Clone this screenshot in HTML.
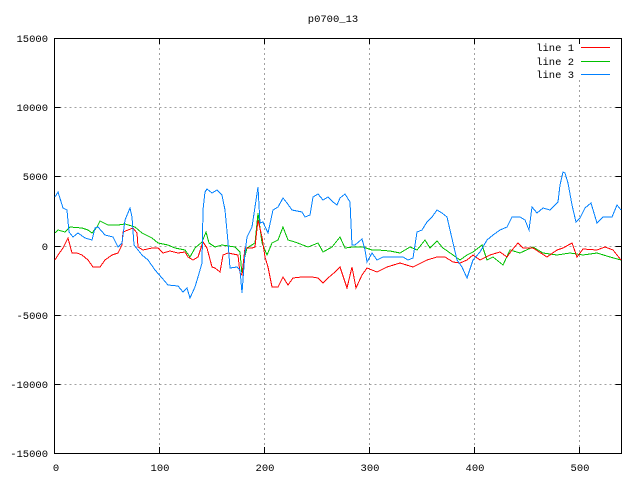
<!DOCTYPE html>
<html><head><style>
html,body{margin:0;padding:0;background:#fff;width:640px;height:480px;overflow:hidden}
svg text{font-family:"Liberation Mono","DejaVu Sans Mono",monospace;font-size:10.5px;fill:#000}
</style></head><body>
<svg width="640" height="480" viewBox="0 0 640 480" xmlns="http://www.w3.org/2000/svg">
<rect width="640" height="480" fill="#fff"/>
<g stroke="#a0a0a0" stroke-width="1" stroke-dasharray="2,3" fill="none">
<path d="M54.5 107.5H621M54.5 176.5H621M54.5 246.5H621M54.5 315.5H621M54.5 384.5H621"/>
<path d="M159.5 38V453M264.5 38V453M369.5 38V453M474.5 38V453M579.5 80V453"/>
</g>
<g stroke="#000" stroke-width="1" fill="none">
<rect x="54.5" y="38.5" width="567" height="415"/>
<path d="M54.5 107.5h6M54.5 176.5h6M54.5 246.5h6M54.5 315.5h6M54.5 384.5h6M621.5 107.5h-6M621.5 176.5h-6M621.5 246.5h-6M621.5 315.5h-6M621.5 384.5h-6"/>
<path d="M159.5 453v-6M264.5 453v-6M369.5 453v-6M474.5 453v-6M579.5 453v-6M159.5 38v6M264.5 38v6M369.5 38v6M474.5 38v6M579.5 38v6"/>
</g>
<text x="333" y="22" text-anchor="middle">p0700_13</text>
<g text-anchor="end">
<text x="48" y="42">15000</text>
<text x="48" y="111">10000</text>
<text x="48" y="180">5000</text>
<text x="48" y="250">0</text>
<text x="48" y="319">-5000</text>
<text x="48" y="388">-10000</text>
<text x="48" y="457">-15000</text>
<text x="574" y="51">line 1</text>
<text x="574" y="65">line 2</text>
<text x="574" y="78">line 3</text>
</g>
<g text-anchor="middle">
<text x="56" y="471">0</text>
<text x="160" y="471">100</text>
<text x="265" y="471">200</text>
<text x="370" y="471">300</text>
<text x="475" y="471">400</text>
<text x="580" y="471">500</text>
</g>
<rect x="581" y="47" width="29" height="1" fill="#ff0000"/>
<rect x="581" y="61" width="29" height="1" fill="#00c000"/>
<rect x="581" y="74" width="29" height="1" fill="#0080ff"/>
<g fill="none" stroke-width="1" shape-rendering="crispEdges">
<polyline stroke="#00c000" points="55,233 58,230 65,232 70,227 82,228 88,230 92,233 97,227 100,221 108,225 118,225 125,224 135,227 142,233 152,238 158,243 168,245 175,248 185,250 190,257 195,248 202,242 206,232 209,243 215,247 222,245 235,247 240,252 242,275 244,260 247,248 255,243 258,213 262,243 267,255 272,243 278,240 283,227 288,240 295,242 308,247 318,243 323,252 332,247 340,237 345,248 353,247 363,247 372,250 378,250 390,251 400,253 410,247 417,250 425,240 430,248 437,241 443,248 453,255 460,260 467,255 473,252 482,245 487,260 493,257 503,265 510,250 520,253 533,247 543,253 557,255 570,253 583,255 597,253 610,257 621,260"/>
<polyline stroke="#ff0000" points="55,260 58,255 63,248 68,238 72,253 77,253 82,255 88,260 93,267 100,267 105,260 112,255 118,253 122,245 123,232 128,230 133,228 137,233 138,247 143,250 152,248 158,248 163,253 170,251 178,253 185,252 188,257 193,260 198,257 203,242 207,248 212,267 215,268 220,272 223,255 228,253 238,255 240,273 242,275 245,248 252,248 255,247 258,220 262,237 265,257 268,267 272,287 278,287 283,277 288,285 293,278 302,277 312,277 318,278 323,283 328,278 335,272 340,267 347,288 352,267 356,288 362,275 367,268 377,272 387,267 400,263 413,267 427,260 437,257 445,257 453,262 460,263 467,260 473,255 480,260 490,255 500,252 507,257 512,250 518,243 523,248 533,248 547,257 557,250 563,248 572,243 577,257 583,249 597,250 605,247 613,250 621,260"/>
<polyline stroke="#0080ff" points="55,197 58,192 63,208 67,210 69,232 73,237 78,233 85,238 92,240 95,228 98,227 105,235 113,237 118,247 122,243 125,220 130,208 132,217 134,245 142,255 148,260 155,270 162,278 168,285 178,286 183,292 187,288 190,298 195,287 198,277 202,263 203,210 205,192 207,189 212,193 217,190 222,195 225,210 228,242 230,268 237,267 240,270 242,293 245,253 247,237 252,227 255,207 258,187 260,223 263,222 268,233 273,210 278,207 283,198 287,203 292,210 302,212 305,217 310,215 313,197 318,194 323,200 328,197 333,202 337,205 340,198 345,194 350,202 352,245 355,245 362,239 365,250 367,262 372,253 377,260 383,257 397,257 403,257 408,260 413,258 417,232 422,230 427,222 432,217 437,210 442,213 447,217 450,230 457,260 462,267 467,278 473,260 480,252 487,240 493,235 500,230 507,227 512,217 520,217 525,220 529,230 532,207 537,213 543,208 550,210 558,202 560,185 563,172 565,173 568,183 572,205 576,222 580,218 585,208 591,203 597,223 603,217 612,217 617,205 621,210"/>
</g>
</svg>
</body></html>
